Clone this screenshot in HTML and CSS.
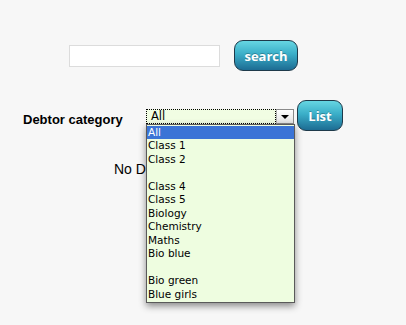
FILE: index.html
```html
<!DOCTYPE html>
<html lang="en">
<head>
    <meta charset="UTF-8">
    <title>Debtors</title>
    <link rel="stylesheet" href="styles.css">
</head>
<body>

<div class="search-row">
    <input type="text" class="search-box">
    <button class="blue-btn search-btn">search</button>
</div>

<div class="filter-row">
    <span class="filter-label">Debtor category</span>
    <div class="select-wrap">
        <div class="fake-select">
            <span class="select-value">All</span>
            <span class="select-arrow"></span>
        </div>
        <!-- open dropdown list -->
        <ul class="select-list">
            <li class="selected">All</li>
            <li>Class 1</li>
            <li>Class 2</li>
            <li></li>
            <li>Class 4</li>
            <li>Class 5</li>
            <li>Biology</li>
            <li>Chemistry</li>
            <li>Maths</li>
            <li>Bio blue</li>
            <li></li>
            <li>Bio green</li>
            <li>Blue girls</li>
        </ul>
    </div>
    <button class="blue-btn list-btn">List</button>
</div>

<p class="no-result">No Debtors found</p>

</body>
</html>
```

FILE: styles.css
```css
html {
    height: 100%;
}
body {
    margin: 0;
    min-height: 100%;
    background-color: #f7f7f7;
    font-family: "Liberation Sans", Arial, sans-serif;
}
.search-row {
    display: flex;
    align-items: center;
    padding: 40px 0 0 69px;
    gap: 14px;
}
.search-box {
    box-sizing: border-box;
    width: 151px;
    height: 22px;
    border: 1px solid #dcdcdc;
    background-color: #fff;
    margin: 0;
}
.blue-btn {
    box-sizing: border-box;
    border: 1px solid #1e3a4a;
    border-radius: 9px;
    background: linear-gradient(#66d6e2, #3aaec8 45%, #1d6c93);
    color: #fff;
    font-family: "Open Sans", "Liberation Sans", sans-serif;
    font-weight: bold;
    font-size: 13px;
    padding: 0;
    margin: 0;
    text-shadow: 0 -1px 0 rgba(0, 0, 0, 0.25);
}
.search-btn {
    width: 64px;
    height: 31px;
}
.filter-row {
    display: flex;
    align-items: center;
    padding: 29px 0 0 23px;
}
.filter-label {
    font-weight: bold;
    font-size: 13px;
    width: 123px;
    padding-top: 8px;
}
.select-wrap {
    position: relative;
    margin-right: 3px;
}
.fake-select {
    display: flex;
    box-sizing: border-box;
    width: 148px;
    height: 15px;
    margin-top: 1px;
}
.select-value {
    flex: 1;
    border: 1px dotted #000;
    background-color: #f1fde3;
    font-family: "DejaVu Sans", sans-serif;
    font-size: 11.5px;
    line-height: 13px;
    padding-left: 4px;
    color: #000;
}
.select-arrow {
    position: relative;
    width: 16px;
    border: 1px solid #8a8a8a;
    border-left-color: #b0b0b0;
    background: linear-gradient(#fff, #e4e4e4);
}
.select-arrow::after {
    content: "";
    position: absolute;
    left: 4px;
    top: 5px;
    border-left: 4px solid transparent;
    border-right: 4px solid transparent;
    border-top: 4px solid #000;
}
.select-list {
    position: absolute;
    left: 0;
    top: 16px;
    box-sizing: border-box;
    width: 149px;
    margin: 0;
    padding: 1px 0;
    list-style: none;
    background-color: #eefde0;
    border: 1px solid #5a5a5a;
    box-shadow: 0 3px 7px rgba(0, 0, 0, 0.45);
    font-family: "DejaVu Sans", sans-serif;
    font-size: 10.5px;
    z-index: 2;
}
.select-list li {
    height: 13.5px;
    line-height: 13.5px;
    padding-left: 1px;
    color: #000;
}
.select-list li.selected {
    background-color: #3b74d6;
    color: #fff;
}
.list-btn {
    width: 46px;
    height: 31px;
}
.no-result {
    margin: 30px 0 0 114px;
    font-size: 14px;
}
```
